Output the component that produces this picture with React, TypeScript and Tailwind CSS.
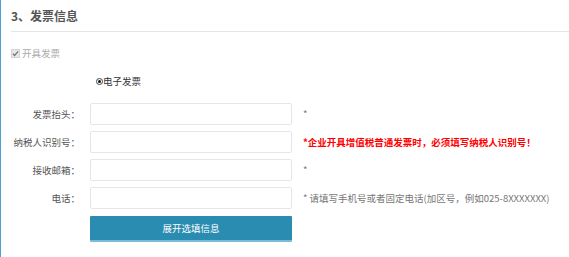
import React from "react";

const rows = [
  { label: "发票抬头：", hint: "*", red: false },
  { label: "纳税人识别号：", hint: "*企业开具增值税普通发票时，必须填写纳税人识别号！", red: true },
  { label: "接收邮箱：", hint: "*", red: false },
  { label: "电话：", hint: "* 请填写手机号或者固定电话(加区号，例如025-8XXXXXXX)", red: false },
];

export default function App() {
  return (
    <div
      className="w-[569px] h-[257px] bg-white border-l border-[#4ca0d6] overflow-hidden"
      style={{ fontFamily: '"Noto Sans CJK SC", "Liberation Sans", sans-serif' }}
    >
      <div className="pl-[10px]">
        <div className="h-[32px] border-b border-[#e5e5e5] flex items-center pt-[1px]">
          <h3 className="text-[12px] font-bold text-[#555]">3、发票信息</h3>
        </div>

        {/* disabled checkbox */}
        <div className="mt-[15px] flex items-center gap-[2px] h-[12px] text-[9.5px] text-[#aaa]">
          <span className="w-[9px] h-[9px] bg-[#e8e8e8] border border-[#d4d4d4] flex items-center justify-center">
            <svg viewBox="0 0 8 8" className="w-[7px] h-[7px]">
              <path d="M1 4.2 L3 6.2 L7 1.5" fill="none" stroke="#777" strokeWidth="1.5" />
            </svg>
          </span>
          开具发票
        </div>

        <div className="mt-[16px] pl-[85px] flex items-center h-[12px] text-[9.5px] text-[#333]">
          <span className="w-[7px] h-[7px] rounded-full border border-[#444] flex items-center justify-center">
            <span className="w-[3px] h-[3px] rounded-full bg-[#111]"></span>
          </span>
          电子发票
        </div>

        <div className="mt-[16px] flex flex-col gap-[6px]">
          {rows.map((row) => (
            <div key={row.label} className="flex items-center">
              <div className="w-[69px] text-right text-[9.5px] text-[#555] whitespace-nowrap">
                {row.label}
              </div>
              <input
                type="text"
                className="ml-[10px] w-[202px] h-[22px] border border-[#e6e6e6] rounded-[2px] bg-white outline-none"
              />
              <div
                className={
                  row.red
                    ? "ml-[11px] text-[9.5px] font-bold text-[#ff0000] whitespace-nowrap"
                    : "ml-[11px] text-[9.5px] text-[#777] whitespace-nowrap"
                }
              >
                {row.hint}
              </div>
            </div>
          ))}
        </div>

        <button
          type="button"
          className="mt-[7px] ml-[79px] w-[202px] h-[26px] bg-[#2b8cb1] border-b-2 border-[#7bbbd8] text-white text-[9.5px] rounded-[1px]"
        >
          展开选填信息
        </button>
      </div>
    </div>
  );
}
